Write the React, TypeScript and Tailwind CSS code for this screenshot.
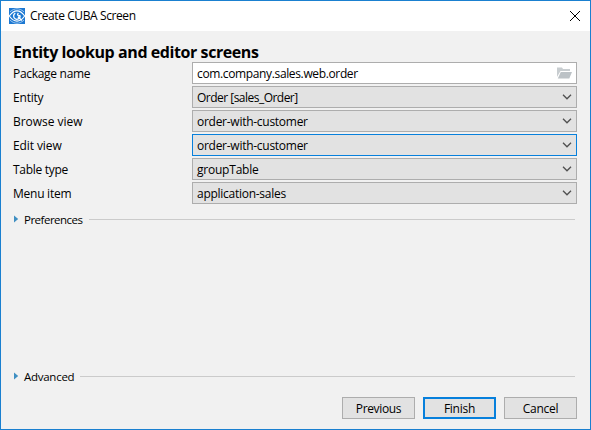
import React from "react";

type Field = { label: string; value: string; spacing: string; labelSpacing: string; focused?: boolean };

const fields: Field[] = [
  { label: "Entity", value: "Order [sales_Order]", spacing: "tracking-[-0.52px]", labelSpacing: "tracking-[-0.2px]" },
  { label: "Browse view", value: "order-with-customer", spacing: "tracking-[-0.27px]", labelSpacing: "tracking-[-0.02px]" },
  { label: "Edit view", value: "order-with-customer", spacing: "tracking-[-0.27px]", labelSpacing: "tracking-[-0.1px]", focused: true },
  { label: "Table type", value: "groupTable", spacing: "tracking-[-0.22px]", labelSpacing: "tracking-[-0.3px]" },
  { label: "Menu item", value: "application-sales", spacing: "tracking-[-0.27px]", labelSpacing: "tracking-[-0.25px]" },
];

function AppIcon() {
  return (
    <svg width="16" height="16" viewBox="0 0 16 16" fill="none" className="shrink-0">
      <rect width="16" height="16" fill="#1c78d2" />
      <path d="M0.3 8C3 4.2 5.2 2.9 8 2.9S13 4.2 15.7 8C13 11.8 10.8 13.1 8 13.1S3 11.8.3 8Z" stroke="#fff" strokeWidth="1.1" />
      <path d="M1 3.8C3.7 1.5 6 .8 8 .8s4.3.7 7 3M1 12.2c2.7 2.3 5 3 7 3s4.3-.7 7-3" stroke="#a9cdf0" strokeWidth="0.9" />
      <path d="M6.3 5.1A3.3 3.3 0 1 0 11.2 8.2M9.2 4.9l-.6 2 1 1 1.9-.4" stroke="#fff" strokeWidth="1.3" />
      <path d="m9 8.8 3.8 3.6" stroke="#fff" strokeWidth="1.4" />
    </svg>
  );
}

function Chevron() {
  return (
    <svg width="10" height="6" viewBox="0 0 10 6" fill="none" className="mr-1 mb-px shrink-0">
      <path d="m1 0.8 4 4 4-4" stroke="#505050" strokeWidth="1.3" />
    </svg>
  );
}

function FolderIcon() {
  return (
    <svg width="16" height="12" viewBox="0 0 16 12" className="mr-px shrink-0">
      <path d="M0 0.5h5l1 1.5h7V4H3.5L0 10Z" fill="#c8cdd0" />
      <path d="M3.8 5H15l-2.7 6.5H0.8Z" fill="#bcc2c6" />
    </svg>
  );
}

function Section({ title, spacing }: { title: string; spacing: string }) {
  return (
    <div className="flex h-4 items-center pr-0.5">
      <svg width="5" height="8" viewBox="0 0 5 8" className="ml-px shrink-0">
        <path d="M0 0.5 4.2 4 0 7.5Z" fill="#3f8fc2" />
      </svg>
      <span className={"ml-[5px] pt-0.5 text-[11.5px] whitespace-nowrap " + spacing}>{title}</span>
      <span className="h-px flex-1 bg-[#cbcbcb]" />
    </div>
  );
}

export default function App() {
  return (
    <main className="flex h-[430px] w-[591px] flex-col border border-[#1a80d0] bg-[#f1f1f1] font-['Open_Sans','Noto_Sans',sans-serif] text-[12px] leading-4 text-black">
      <header className="flex h-[30px] shrink-0 items-center bg-white pr-2.5 pl-2">
        <AppIcon />
        <h1 className="ml-[5px] flex-1 tracking-[-0.4px]">Create CUBA Screen</h1>
        <svg width="10" height="10" viewBox="0 0 10 10" className="shrink-0" fill="none">
          <path d="m0 0 10 10M10 0 0 10" stroke="#000" strokeWidth="1" />
        </svg>
      </header>
      <section className="flex flex-1 flex-col pr-[13px] pl-3">
        <h2 className="mt-[11px] h-5 text-[16px] leading-5 font-bold tracking-[-0.42px]">Entity lookup and editor screens</h2>
        <div className="flex flex-col gap-0.5">
          <div className="flex h-[22px] items-center">
            <span className="w-[179px] pt-0.5 tracking-[-0.3px]">Package name</span>
            <div className="flex h-[22px] w-[385px] items-center border border-[#adadad] bg-white pr-0.5 pl-1">
              <span className="flex-1 pt-0.5 tracking-[-0.36px]">com.company.sales.web.order</span>
              <FolderIcon />
            </div>
          </div>
          {fields.map((f) => (
            <div key={f.label} className="flex h-[22px] items-center">
              <span className={"w-[179px] pt-0.5 " + f.labelSpacing}>{f.label}</span>
              <div className={"flex h-[22px] w-[385px] items-center border bg-[#e2e2e2] pl-1 " + (f.focused ? "border-[#0780dc]" : "border-[#adadad]")}>
                <span className={"flex-1 pt-0.5 " + f.spacing}>{f.value}</span>
                <Chevron />
              </div>
            </div>
          ))}
        </div>
        <div className="mt-[7px]">
          <Section title="Preferences" spacing="w-[65px] tracking-[-0.5px]" />
        </div>
        <div className="mt-[141px]">
          <Section title="Advanced" spacing="w-[56px] tracking-[-0.27px]" />
        </div>
        <footer className="mt-[13px] flex justify-end gap-2">
          <button className="h-[22px] w-[73px] border border-[#adadad] bg-[#e2e2e2] pt-0.5 tracking-[-0.35px]">Previous</button>
          <button className="h-[22px] w-[73px] border-2 border-[#0780dc] bg-[#e2e2e2] pt-0.5 tracking-[-0.25px]">Finish</button>
          <button className="h-[22px] w-[73px] border border-[#adadad] bg-[#e2e2e2] pt-0.5 tracking-[-0.25px]">Cancel</button>
        </footer>
      </section>
    </main>
  );
}
